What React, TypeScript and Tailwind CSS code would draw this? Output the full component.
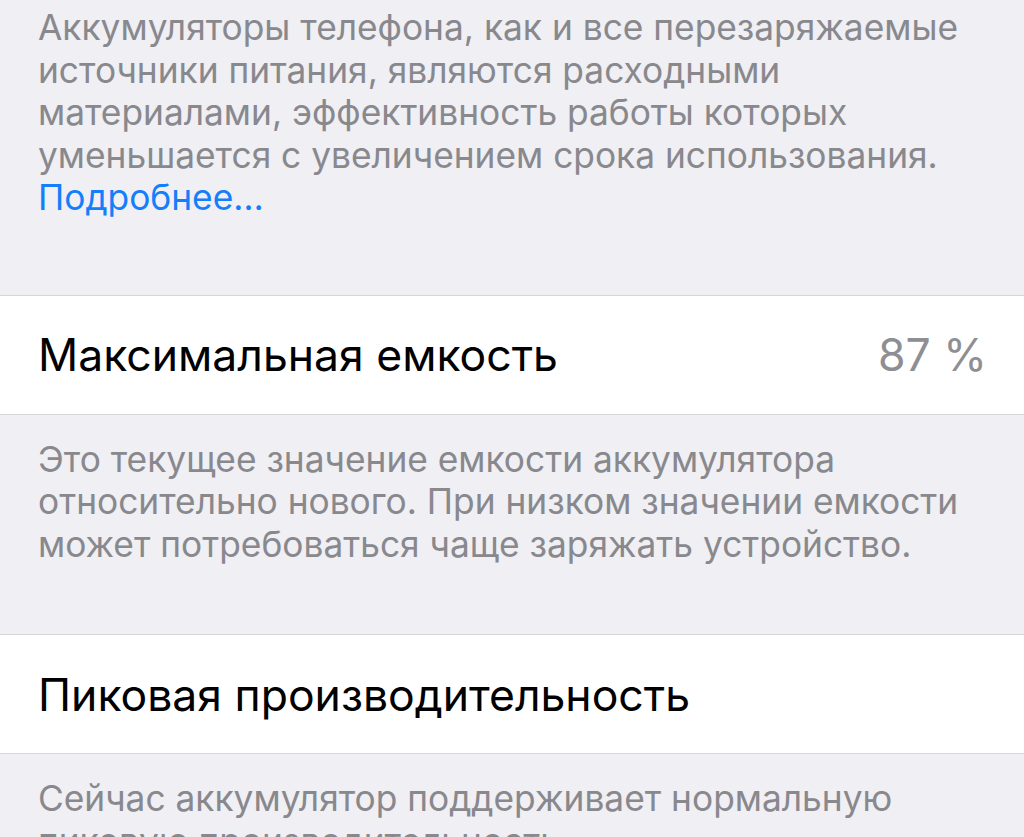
const font = { fontFamily: "Inter, 'Noto Sans', sans-serif" };

const Footer = ({ children, className = "" }: { children: React.ReactNode; className?: string }) => (
  <div className={`px-[38px] text-[35.3px] leading-[42.5px] text-[#88888d] ${className}`}>{children}</div>
);

const Row = ({ label, value }: { label: string; value?: string }) => (
  <div className="flex h-[120px] items-center justify-between border-y border-[#d6d6da] bg-white pl-[38px] pr-[37px]">
    <span className="pt-[2px] text-[44.5px] text-black">{label}</span>
    {value && <span className="pt-[2px] text-[44.5px] text-[#8e8e93]">{value}</span>}
  </div>
);

export default function App() {
  return (
    <div className="h-[837px] w-[1024px] overflow-hidden bg-[#efeff4]" style={font}>
      <Footer className="pt-[7px] pb-[75px]">
        <p>
          Аккумуляторы телефона, как и все перезаряжаемые
          <br />
          источники питания, являются расходными
          <br />
          материалами, эффективность работы которых
          <br />
          уменьшается с увеличением срока использования.
        </p>
        <p className="text-[#147efb]">Подробнее…</p>
      </Footer>

      <Row label="Максимальная емкость" value="87 %" />

      <Footer className="pt-[24px] pb-[68px]">
        <p>
          Это текущее значение емкости аккумулятора
          <br />
          относительно нового. При низком значении емкости
          <br />
          может потребоваться чаще заряжать устройство.
        </p>
      </Footer>

      <Row label="Пиковая производительность" />

      <Footer className="pt-[24px]">
        <p>
          Сейчас аккумулятор поддерживает нормальную
          <br />
          пиковую производительность.
        </p>
      </Footer>
    </div>
  );
}
